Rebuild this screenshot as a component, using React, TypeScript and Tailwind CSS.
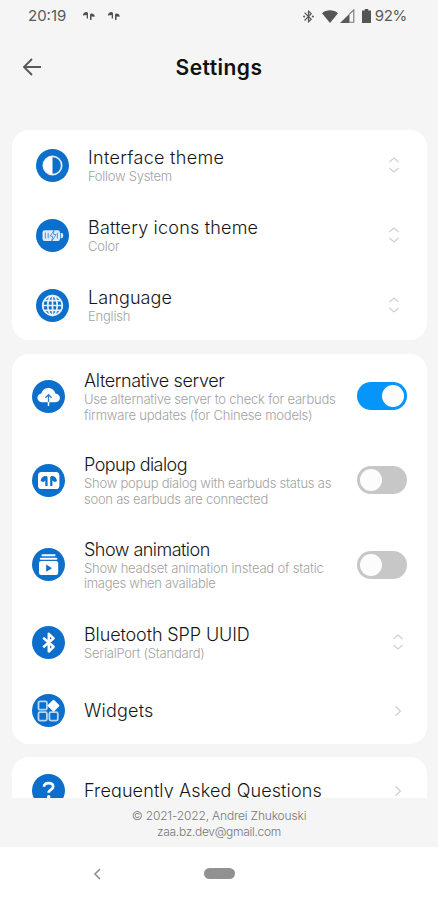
import React from 'react';
import { MdBluetoothConnected } from 'react-icons/md';

const ContrastIcon = () => (
  <svg viewBox="0 0 33 33" className="h-[33px] w-[33px]" fill="none">
    <circle cx="16.5" cy="16.5" r="9.2" stroke="#e3eefa" strokeWidth="1.7" />
    <path d="M16.5 7.5a9 9 0 0 0 0 18z" fill="white" />
  </svg>
);

const BatteryIcon = () => (
  <svg viewBox="0 0 33 33" className="h-[33px] w-[33px]" fill="none">
    <rect x="6.5" y="11.3" width="17.5" height="10.6" rx="2.2" fill="#dfebf9" />
    <path d="M24.6 14h1.200q1.500 0 1.500 2.600t-1.500 2.600h-1.200z" fill="#dfebf9" />
    <path d="M9.400 13.600v6M12.200 14v5.200M21.400 13.800v5.600" stroke="#5a9ce0" strokeWidth="1.100" />
    <path d="M18 11.300l-3.800 5.800h2.600l-1.100 5 4.300-6.500h-2.700z" fill="white" stroke="#2b80d2" strokeWidth="0.800" />
  </svg>
);

const GlobeIcon = () => (
  <svg viewBox="0 0 33 33" className="h-[33px] w-[33px]" fill="none" stroke="#e9f2fc" strokeWidth="1.7">
    <circle cx="16.5" cy="16.500" r="9.8" />
    <ellipse cx="16.5" cy="16.500" rx="4.700" ry="9.800" />
    <path d="M16.500 7v19M7 16.500h19M8.700 11.600h15.600M8.700 21.400h15.600" />
  </svg>
);

const CloudIcon = () => (
  <svg viewBox="0 0 33 33" className="h-[33px] w-[33px]" fill="none">
    <path
      d="M10.300 22.300c-2.800 0-4.900-1.800-4.900-4.500 0-2.400 1.700-4.100 4-4.400.8-3.200 3.500-5.400 7-5.400 3.600 0 6.300 2.300 7 5.600 2.600.3 4.500 1.900 4.500 4.400 0 2.600-2 4.300-4.700 4.300z"
      fill="white"
    />
    <path d="M16.500 22.500v-7.300M13.400 17.800l3.100-3.100 3.100 3.100" stroke="#2b80d2" strokeWidth="1.300" />
    <path d="M16.500 22v4" stroke="white" strokeWidth="1.500" />
  </svg>
);

const PopupIcon = () => (
  <svg viewBox="0 0 33 33" className="h-[33px] w-[33px]" fill="none">
    <rect x="6" y="8" width="21.400" height="17" rx="3.600" fill="white" />
    <path d="M8.700 17.300c0-2.800 2-5.200 5-5.200 1.300 0 1.900.6 1.900 1.900v8h-2.300v-5.400l-1.700 1.500z" fill="#0b6fcb" />
    <path d="M24.900 17.300c0-2.800-2-5.200-4.800-5.200-1.300 0-1.900.6-1.900 1.900v8h2.200v-5.400l2 1.500z" fill="#0b6fcb" />
  </svg>
);

const AnimationIcon = () => (
  <svg viewBox="0 0 33 33" className="h-[33px] w-[33px]" fill="none">
    <path d="M10.500 7.300h12M8.800 10.800h15.600" stroke="white" strokeWidth="2.100" strokeLinecap="round" />
    <rect x="7" y="13" width="19.200" height="14" rx="2.200" fill="white" />
    <path d="M14.200 16.500v7.300l5.800-3.600z" fill="#0b6fcb" />
  </svg>
);

const BluetoothIcon = () => (
  <svg viewBox="0 0 33 33" className="h-[33px] w-[33px]" fill="none" stroke="white" strokeWidth="2.500" strokeLinejoin="round">
    <path d="M11.200 11.800l10.400 9-4.800 4.700V7.800l4.800 4.500-10.400 9" />
  </svg>
);

const WidgetsIcon = () => (
  <svg viewBox="0 0 33 33" className="h-[33px] w-[33px]" fill="none">
    <g stroke="#b9d6f4" strokeWidth="1.800">
      <rect x="6.500" y="7.300" width="8.400" height="8.400" rx="1.500" />
      <rect x="6.500" y="18.200" width="8.400" height="8.400" rx="1.500" />
      <rect x="17.400" y="18.200" width="8.400" height="8.400" rx="1.500" />
    </g>
    <path d="M21.500 6.700l5 4.900-5 4.900-5-4.900z" fill="white" stroke="white" strokeWidth="1.800" strokeLinejoin="round" />
  </svg>
);

const QuestionIcon = () => (
  <svg viewBox="0 0 33 33" className="h-[33px] w-[33px]" fill="none">
    <path d="M12 12.800c.1-2.500 1.900-3.700 4.600-3.700s4.600 1.300 4.600 3.500c0 3-4.500 3-4.500 6.200" stroke="white" strokeWidth="2.700" />
    <circle cx="16.700" cy="22.800" r="1.700" fill="white" />
  </svg>
);

const EarbudsIcon = () => (
  <svg viewBox="0 0 14 10" className="h-[10px] w-[14px]" fill="#505050">
    <path d="M.8 4.600C1.200 2.200 2.500 1 4.300 1 5.600 1 6 1.700 6 2.800v4.600H4.700V3.900z" />
    <path d="M8 9V4.200C8 3 8.500 2.400 9.600 2.400c1.700 0 3 1 3.200 3.400L9.500 5.400V9z" />
  </svg>
);

const UpDown = () => (
  <svg viewBox="0 0 12 18" className="h-[18px] w-3" fill="none" stroke="#d0d0d0" strokeWidth="1.200">
    <path d="M1.500 6L6 2l4.500 4M1.500 12L6 16l4.500-4" />
  </svg>
);

const Chevron = () => (
  <svg viewBox="0 0 8 12" className="mr-0.5 h-3 w-2" fill="none" stroke="#d0d0d0" strokeWidth="1.200">
    <path d="M1.500 1.200L6.500 6l-5 4.800" />
  </svg>
);

const Toggle: React.FC<{ on?: boolean }> = ({ on }) => (
  <div className={`flex h-7 w-[50px] flex-shrink-0 items-center rounded-full px-[3px] ${on ? 'justify-end bg-[#0696fb]' : 'justify-start bg-[#c7c7c7]'}`}>
    <div className="h-[22px] w-[22px] rounded-full bg-[#fcfcfc]" />
  </div>
);

interface RowProps {
  icon: React.ReactNode;
  title: string;
  titleClass: string;
  lines?: { text: string; className: string }[];
  control: React.ReactNode;
  className: string;
}

const Row: React.FC<RowProps> = ({ icon, title, titleClass, lines, control, className }) => (
  <div className={`flex flex-shrink-0 items-center ${className}`}>
    <div className="flex h-[33px] w-[33px] flex-shrink-0 items-center justify-center rounded-full bg-[#0b6fcb]">{icon}</div>
    <div className="ml-[19px] flex-1 whitespace-nowrap">
      <p className={`text-[18px] leading-[23px] text-[#161616] ${titleClass}`}>{title}</p>
      {lines?.map((line) => (
        <p key={line.text} className={`text-[13px] leading-[15.5px] text-[#a2a2a2] ${line.className}`}>{line.text}</p>
      ))}
    </div>
    {control}
  </div>
);

const App: React.FC = () => (
  <div className="flex h-[900px] w-[438px] flex-col overflow-hidden bg-[#f5f5f5] font-['Inter',sans-serif] font-light">
    <div className="flex h-8 flex-shrink-0 items-center pr-[31px] pl-7 text-[#5a5a5a]">
      <span className="text-[15px] font-normal">20:19</span>
      <div className="ml-4 flex gap-[11px]">
        <EarbudsIcon />
        <EarbudsIcon />
      </div>
      <div className="ml-auto flex items-center">
        <MdBluetoothConnected className="h-[15px] w-[15px]" />
        <svg viewBox="0 0 16 13" className="ml-1.5 h-[13px] w-4" fill="#555">
          <path d="M0 3.200C4.500-.6 11.500-.6 16 3.200L8 13z" />
        </svg>
        <svg viewBox="0 0 15 14" className="ml-0.5 h-[14px] w-[15px]" fill="#5a5a5a">
          <path d="M0 14L9.500 4.800V14z" />
          <path d="M9.500 5L13.800.900V13.300H9.500" fill="none" stroke="#777" strokeWidth="1.100" />
        </svg>
        <svg viewBox="0 0 9 14" className="mr-1 ml-[7px] h-[14px] w-[9px]" fill="#555">
          <path d="M2.700 0h3.600v1.500H9V14H0V1.500h2.700z" />
        </svg>
        <span className="text-[15px] font-normal tracking-[-0.3px]">92%</span>
      </div>
    </div>

    <div className="grid h-[98px] flex-shrink-0 grid-cols-[1fr_auto_1fr] items-start px-[22px] pt-[23px]">
      <svg viewBox="0 0 20 20" className="mt-[2px] h-5 w-5" fill="none" stroke="#585858" strokeWidth="1.900">
        <path d="M19 10H2.500M10 2L2 10l8 8" />
      </svg>
      <h1 className="text-[21px] leading-[26px] font-semibold tracking-[0.45px] text-[#111]">Settings</h1>
    </div>

    <div className="mx-3 mr-[11px] flex-shrink-0 rounded-[17px] bg-white">
      <Row
        className="h-[70px] pr-[27px] pl-6"
        icon={<ContrastIcon />}
        title="Interface theme"
        titleClass="tracking-[0.3px]"
        lines={[{ text: 'Follow System', className: 'tracking-[-0.27px]' }]}
        control={<UpDown />}
      />
      <Row
        className="h-[70px] pr-[27px] pl-6"
        icon={<BatteryIcon />}
        title="Battery icons theme"
        titleClass="tracking-[0.2px]"
        lines={[{ text: 'Color', className: 'tracking-[-0.2px]' }]}
        control={<UpDown />}
      />
      <Row
        className="h-[70px] pr-[27px] pl-6"
        icon={<GlobeIcon />}
        title="Language"
        titleClass="tracking-[0.1px]"
        lines={[{ text: 'English', className: 'tracking-[-0.2px]' }]}
        control={<UpDown />}
      />
    </div>

    <div className="mx-3 mt-3.5 mr-[11px] flex-shrink-0 rounded-[17px] bg-white">
      <Row
        className="h-[84px] pr-5 pl-5"
        icon={<CloudIcon />}
        title="Alternative server"
        titleClass="tracking-[-0.38px]"
        lines={[
          { text: 'Use alternative server to check for earbuds', className: 'tracking-[-0.22px]' },
          { text: 'firmware updates (for Chinese models)', className: 'tracking-[-0.2px]' },
        ]}
        control={<Toggle on />}
      />
      <Row
        className="h-[84px] pr-5 pl-5"
        icon={<PopupIcon />}
        title="Popup dialog"
        titleClass="tracking-[-0.58px]"
        lines={[
          { text: 'Show popup dialog with earbuds status as', className: 'tracking-[-0.22px]' },
          { text: 'soon as earbuds are connected', className: 'tracking-[-0.25px]' },
        ]}
        control={<Toggle />}
      />
      <Row
        className="h-[85px] pr-5 pl-5"
        icon={<AnimationIcon />}
        title="Show animation"
        titleClass="tracking-[-0.53px]"
        lines={[
          { text: 'Show headset animation instead of static', className: 'tracking-[-0.19px]' },
          { text: 'images when available', className: 'tracking-[-0.27px]' },
        ]}
        control={<Toggle />}
      />
      <Row
        className="h-[70px] pr-[23px] pl-5"
        icon={<BluetoothIcon />}
        title="Bluetooth SPP UUID"
        titleClass="tracking-[-0.12px]"
        lines={[{ text: 'SerialPort (Standard)', className: 'tracking-[-0.22px]' }]}
        control={<UpDown />}
      />
      <Row className="h-[67px] pr-[23px] pl-5" icon={<WidgetsIcon />} title="Widgets" titleClass="tracking-[0.2px]" control={<Chevron />} />
    </div>

    <div className="mx-3 mt-[13px] mr-[11px] h-[41px] flex-shrink-0 overflow-hidden rounded-t-[17px] bg-white">
      <Row className="h-[67px] pr-[23px] pl-5" icon={<QuestionIcon />} title="Frequently Asked Questions" titleClass="tracking-[0.12px]" control={<Chevron />} />
    </div>

    <div className="h-[49px] flex-shrink-0 pt-[10px] text-center text-[12px] leading-[15.5px] text-[#777]">
      <p className="tracking-[-0.16px]">© 2021-2022, Andrei Zhukouski</p>
      <p className="tracking-[-0.3px]">zaa.bz.dev@gmail.com</p>
    </div>

    <div className="grid flex-1 grid-cols-3 items-center bg-white">
      <svg viewBox="0 0 8 12" className="ml-[93px] h-3 w-2" fill="none" stroke="#909090" strokeWidth="1.600">
        <path d="M7 1L2 6l5 5" />
      </svg>
      <div className="h-[11px] w-[31px] justify-self-center rounded-full bg-[#919191]" />
    </div>
  </div>
);

export default App;
